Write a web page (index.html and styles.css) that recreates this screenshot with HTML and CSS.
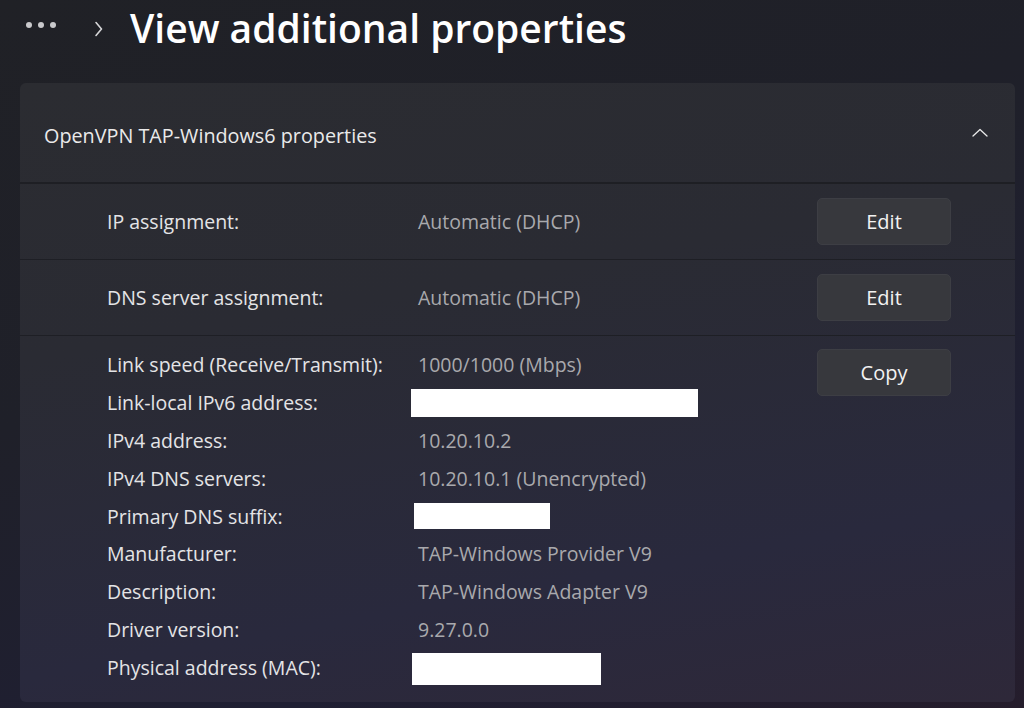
FILE: index.html
```html
<!DOCTYPE html>
<html>
<head>
<meta charset="utf-8">
<link rel="stylesheet" href="styles.css">
</head>
<body>
<div class="page">
  <header class="breadcrumb">
    <span class="dots"><i></i><i></i><i></i></span>
    <svg class="crumb-chevron" width="12" height="18" viewBox="0 0 12 18"><path d="M3 2.5 L8.5 9 L3 15.5" fill="none" stroke="#d6d6d8" stroke-width="1.6" stroke-linecap="round" stroke-linejoin="round"/></svg>
    <h1 class="title">View additional properties</h1>
  </header>
  <section class="card">
    <div class="card-head">
      <span class="card-title">OpenVPN TAP-Windows6 properties</span>
      <svg class="collapse" width="18" height="12" viewBox="0 0 18 12"><path d="M2 9 L9 2.5 L16 9" fill="none" stroke="#e8e8e8" stroke-width="1.3" stroke-linecap="round" stroke-linejoin="round"/></svg>
    </div>
    <div class="row">
      <span class="label">IP assignment:</span>
      <span class="value">Automatic (DHCP)</span>
      <button class="btn">Edit</button>
    </div>
    <div class="row">
      <span class="label">DNS server assignment:</span>
      <span class="value">Automatic (DHCP)</span>
      <button class="btn">Edit</button>
    </div>
    <div class="details">
      <dl class="grid">
        <dt>Link speed (Receive/Transmit):</dt><dd>1000/1000 (Mbps)</dd>
        <dt>Link-local IPv6 address:</dt><dd><span class="redact r1"></span></dd>
        <dt>IPv4 address:</dt><dd>10.20.10.2</dd>
        <dt>IPv4 DNS servers:</dt><dd>10.20.10.1 (Unencrypted)</dd>
        <dt>Primary DNS suffix:</dt><dd><span class="redact r2"></span></dd>
        <dt>Manufacturer:</dt><dd>TAP-Windows Provider V9</dd>
        <dt>Description:</dt><dd>TAP-Windows Adapter V9</dd>
        <dt>Driver version:</dt><dd>9.27.0.0</dd>
        <dt>Physical address (MAC):</dt><dd><span class="redact r3"></span></dd>
      </dl>
      <button class="btn copy">Copy</button>
    </div>
  </section>
</div>
</body>
</html>
```
FILE: styles.css
```css
* { box-sizing: border-box; }
html, body { margin: 0; height: 100%; }
body {
  background: linear-gradient(160deg, #202126 0%, #1f2029 40%, #1f1f33 75%, #251d2c 100%);
  font-family: "Open Sans", "Noto Sans", sans-serif;
  color: #e4e4e6;
  overflow: hidden;
}
.page {
  width: 1024px;
  height: 708px;
  padding: 0 9px 0 20px;
  display: flex;
  flex-direction: column;
}
.breadcrumb {
  height: 83px;
  display: flex;
  align-items: flex-start;
  padding-top: 6px;
}
.dots {
  display: flex;
  gap: 6px;
  margin: 16px 0 0 6px;
}
.dots i {
  width: 6px; height: 6px; border-radius: 50%;
  background: #c9c9cc;
  display: block;
}
.crumb-chevron { margin: 14px 0 0 37px; }
.title {
  margin: 0 0 0 25px;
  font-size: 39px;
  font-weight: 600;
  letter-spacing: 0;
  color: #ffffff;
  line-height: 44px;
}
.card {
  flex: 1;
  margin-bottom: 6px;
  border-radius: 6px;
  background: linear-gradient(170deg, #2b2c31 0%, #2a2b33 35%, #29293d 75%, #2e2839 100%);
  overflow: hidden;
  display: flex;
  flex-direction: column;
}
.card-head {
  height: 101px;
  display: flex;
  align-items: center;
  justify-content: space-between;
  padding: 5px 26px 0 24px;
  border-bottom: 2px solid #1e1f24;
}
.card-title {
  font-size: 19.8px;
  color: #eaeaea;
}
.collapse { margin-top: -5px; }
.row {
  height: 76px;
  display: flex;
  align-items: center;
  padding: 0 64px 0 87px;
  border-bottom: 1px solid #1e1f25;
}
.label {
  width: 311px;
  font-size: 19.5px;
  color: #e4e4e6;
}
.value {
  flex: 1;
  font-size: 19.5px;
  color: #a9a9ad;
}
.btn {
  width: 134px;
  height: 47px;
  border: 1px solid #3d3e44;
  border-radius: 5px;
  background: #37383d;
  color: #f2f2f2;
  font-family: "Open Sans", "Noto Sans", sans-serif;
  font-size: 20px;
  padding: 0;
}
.details {
  flex: 1;
  display: flex;
  justify-content: space-between;
  padding: 10px 64px 0 87px;
}
.grid {
  margin: 0;
  display: grid;
  grid-template-columns: 311px auto;
  grid-auto-rows: 37.8px;
  align-items: center;
  font-size: 19.5px;
}
.grid dt { color: #e4e4e6; }
.grid dd { margin: 0; color: #a9a9ad; display: flex; align-items: center; }
.redact { display: block; background: #ffffff; }
.r1 { width: 287px; height: 28px; margin-left: -7px; }
.r2 { width: 136px; height: 26px; margin-left: -4px; }
.r3 { width: 189px; height: 32px; margin-left: -6px; margin-top: 4px; }
.copy { margin-top: 3px; }
```
